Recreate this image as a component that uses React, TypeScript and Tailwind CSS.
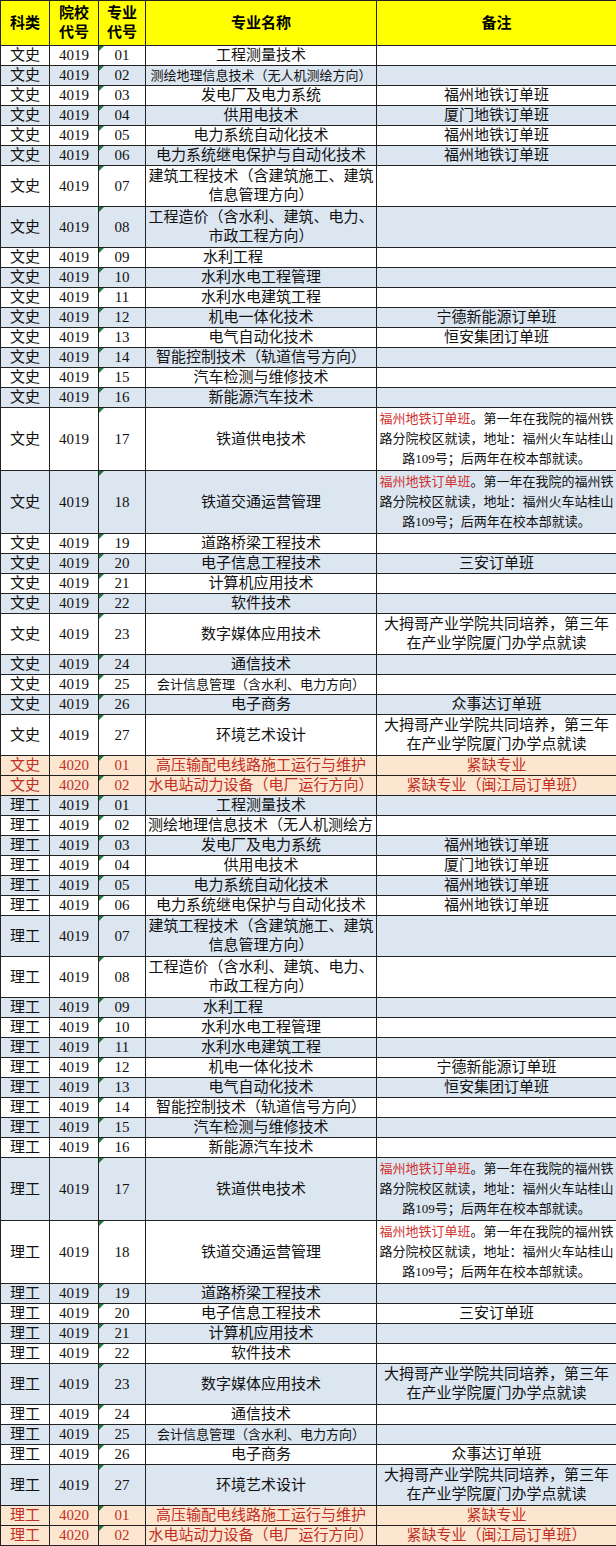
import type { ReactNode } from "react";

type Row = {
  school: string;
  code: string;
  name: ReactNode;
  note?: ReactNode;
  size: "one" | "two" | "three";
  urgent?: boolean;
};

const railNote = (
  <div className="text-[13px] leading-[20px] whitespace-nowrap">
    <span className="text-[#d0312d]">福州地铁订单班</span>。第一年在我院的福州铁
    <br />
    路分院校区就读，地址：福州火车站桂山
    <br />
    路109号；后两年在校本部就读。
  </div>
);

const dmgNote = (
  <>
    大拇哥产业学院共同培养，第三年
    <br />
    在产业学院厦门办学点就读
  </>
);

function buildRows(clipped: boolean): Row[] {
  return [
    { school: "4019", code: "01", name: "工程测量技术", size: "one" },
    {
      school: "4019",
      code: "02",
      // in the 理工 block the cell is too narrow, the sheet only shows the start
      name: clipped ? (
        <div className="w-full whitespace-nowrap text-left pl-[2px]">测绘地理信息技术（无人机测绘方</div>
      ) : (
        <span className="text-[13px] whitespace-nowrap">测绘地理信息技术（无人机测绘方向）</span>
      ),
      size: "one",
    },
    { school: "4019", code: "03", name: "发电厂及电力系统", note: "福州地铁订单班", size: "one" },
    { school: "4019", code: "04", name: "供用电技术", note: "厦门地铁订单班", size: "one" },
    { school: "4019", code: "05", name: "电力系统自动化技术", note: "福州地铁订单班", size: "one" },
    { school: "4019", code: "06", name: "电力系统继电保护与自动化技术", note: "福州地铁订单班", size: "one" },
    {
      school: "4019",
      code: "07",
      name: (
        <>
          建筑工程技术（含建筑施工、建筑
          <br />
          信息管理方向）
        </>
      ),
      size: "two",
    },
    {
      school: "4019",
      code: "08",
      name: (
        <>
          工程造价（含水利、建筑、电力、
          <br />
          市政工程方向）
        </>
      ),
      size: "two",
    },
    { school: "4019", code: "09", name: <span className="pr-[56px]">水利工程</span>, size: "one" },
    { school: "4019", code: "10", name: "水利水电工程管理", size: "one" },
    { school: "4019", code: "11", name: "水利水电建筑工程", size: "one" },
    { school: "4019", code: "12", name: "机电一体化技术", note: "宁德新能源订单班", size: "one" },
    { school: "4019", code: "13", name: "电气自动化技术", note: "恒安集团订单班", size: "one" },
    { school: "4019", code: "14", name: "智能控制技术（轨道信号方向）", size: "one" },
    { school: "4019", code: "15", name: "汽车检测与维修技术", size: "one" },
    { school: "4019", code: "16", name: "新能源汽车技术", size: "one" },
    { school: "4019", code: "17", name: "铁道供电技术", note: railNote, size: "three" },
    { school: "4019", code: "18", name: "铁道交通运营管理", note: railNote, size: "three" },
    { school: "4019", code: "19", name: "道路桥梁工程技术", size: "one" },
    { school: "4019", code: "20", name: "电子信息工程技术", note: "三安订单班", size: "one" },
    { school: "4019", code: "21", name: "计算机应用技术", size: "one" },
    { school: "4019", code: "22", name: "软件技术", size: "one" },
    { school: "4019", code: "23", name: "数字媒体应用技术", note: dmgNote, size: "two" },
    { school: "4019", code: "24", name: "通信技术", size: "one" },
    {
      school: "4019",
      code: "25",
      name: <span className="text-[13px]">会计信息管理（含水利、电力方向）</span>,
      size: "one",
    },
    { school: "4019", code: "26", name: "电子商务", note: "众事达订单班", size: "one" },
    { school: "4019", code: "27", name: "环境艺术设计", note: dmgNote, size: "two" },
    { school: "4020", code: "01", name: "高压输配电线路施工运行与维护", note: "紧缺专业", size: "one", urgent: true },
    {
      school: "4020",
      code: "02",
      name: <span className="whitespace-nowrap">水电站动力设备（电厂运行方向）</span>,
      note: "紧缺专业（闽江局订单班）",
      size: "one",
      urgent: true,
    },
  ];
}

const heights = { one: "h-[20px]", two: "h-[41px]", three: "h-[63px]" };

function Section({ subject, blueOdd }: { subject: string; blueOdd: boolean }) {
  const rows = buildRows(subject === "理工");
  return (
    <>
      {rows.map((r, i) => {
        const odd = i % 2 === 0;
        const bg = r.urgent
          ? "bg-[#fde6cf]"
          : odd === blueOdd
          ? "bg-[#dce6f1]"
          : "bg-white";
        const text = r.urgent ? "text-[#bf2f25]" : "text-[#111]";
        return (
          <tr key={subject + r.school + r.code} className={`${heights[r.size]} ${bg} ${text}`}>
            <td className="border border-[#222] p-0 text-center">{subject}</td>
            <td className="border border-[#222] p-0 text-center">{r.school}</td>
            <td className="relative border border-[#222] p-0 text-center">
              <span className="absolute left-0 top-0 h-0 w-0 border-t-[5px] border-r-[5px] border-t-[#1f7a3a] border-r-transparent" />
              {r.code}
            </td>
            <td className="border border-[#222] p-0 text-center">{r.name}</td>
            <td className="border border-[#222] p-0 text-center">{r.note}</td>
          </tr>
        );
      })}
    </>
  );
}

export default function App() {
  return (
    <div className="w-[616px] bg-white">
      <table className="w-[616px] table-fixed border-collapse font-['Liberation_Serif','Noto_Sans_CJK_SC',serif] text-[15px] leading-[19px]">
        <colgroup>
          <col className="w-[49px]" />
          <col className="w-[49px]" />
          <col className="w-[47px]" />
          <col className="w-[231px]" />
          <col className="w-[240px]" />
        </colgroup>
        <thead>
          <tr className="h-[45px] bg-[#ffff00] font-bold text-black">
            <th className="border border-[#222] p-0">科类</th>
            <th className="border border-[#222] p-0">
              院校
              <br />
              代号
            </th>
            <th className="border border-[#222] p-0">
              专业
              <br />
              代号
            </th>
            <th className="border border-[#222] p-0">专业名称</th>
            <th className="border border-[#222] p-0">备注</th>
          </tr>
        </thead>
        <tbody>
          <Section subject="文史" blueOdd={false} />
          <Section subject="理工" blueOdd={true} />
        </tbody>
      </table>
    </div>
  );
}
